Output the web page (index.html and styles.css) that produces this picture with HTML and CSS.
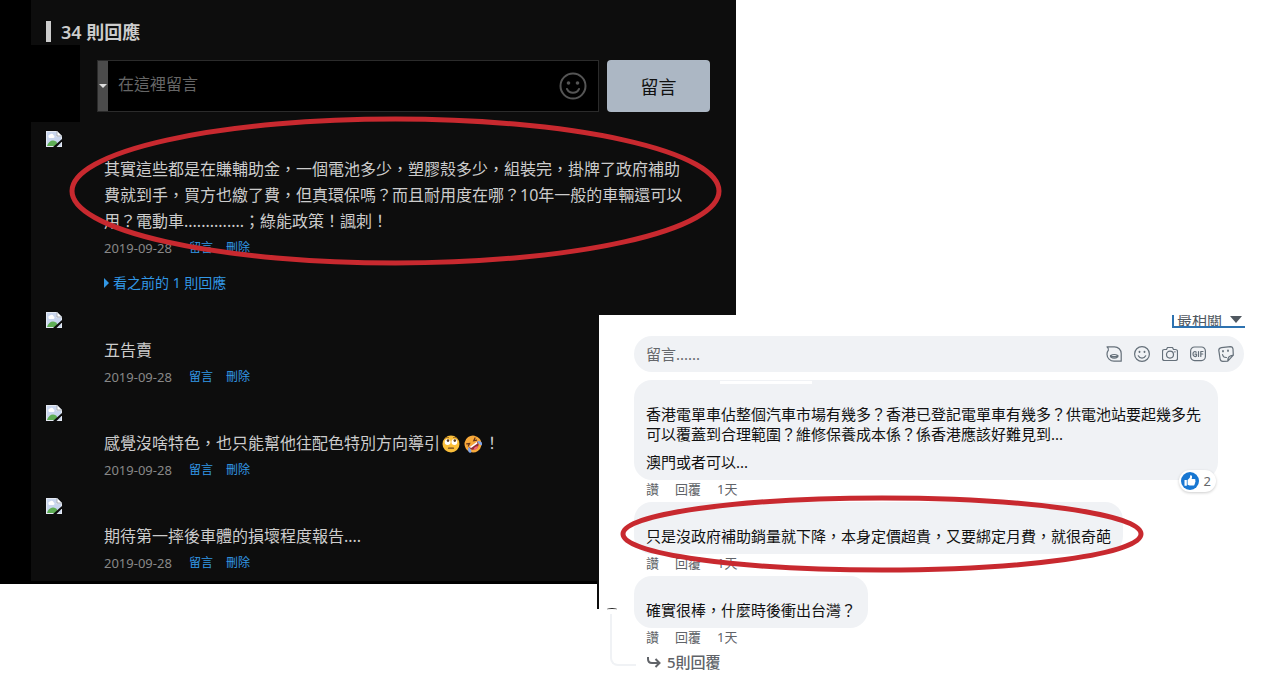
FILE: index.html
```html
<!DOCTYPE html>
<html lang="zh-Hant">
<head>
<meta charset="utf-8">
<meta name="viewport" content="width=device-width, initial-scale=1">
<title>34 則回應</title>
<link rel="stylesheet" href="styles.css">
</head>
<body>
<svg class="defs" aria-hidden="true">
  <symbol id="broken" viewBox="0 0 16 16">
    <path d="M0 0h11l5 5v11H0z" fill="#e4e9f2"/>
    <path d="M1 1h9.500v5H15v9H1z" fill="#c9d6ee"/>
    <path d="M2.500 6a1.800 1.800 0 0 1 1.500-2.500 2 2 0 0 1 3.500.8A1.400 1.400 0 0 1 7.500 7H3z" fill="#fff"/>
    <path d="M1 15c1-3.500 3.500-5.500 6-5.500 2 0 3.500 1 4 2V15z" fill="#5fae56"/>
    <path d="M11 0v5h5z" fill="#fff" stroke="#8c939c" stroke-width=".7"/>
    <path d="M16 8v2.500L10.500 16H7z" fill="#0d0d0d"/>
  </symbol>
</svg>
<main class="collage">
  <section class="forum">
    <h1 class="forum-title">34 則回應</h1>
    <form class="composer">
      <div class="composer-avatar"></div>
      <div class="composer-box">
        <button class="identity" type="button" aria-label="選擇身分"><svg width="8" height="4" viewBox="0 0 8 4" aria-hidden="true"><path d="M0 0h8L4 4z" fill="#ddd"/></svg></button>
        <input class="composer-input" type="text" aria-label="在這裡留言" placeholder="在這裡留言">
        <button class="smile" type="button" aria-label="表情符號"><svg width="28" height="28" viewBox="0 0 28 28" fill="none" stroke="#555" stroke-width="2" aria-hidden="true"><circle cx="14" cy="14" r="12.500"/><path d="M8 17c2.500 5 9.500 5 12 0" stroke-linecap="round"/><circle cx="9.500" cy="11" r="1.800" fill="#555" stroke="none"/><circle cx="18.500" cy="11" r="1.800" fill="#555" stroke="none"/></svg></button>
      </div>
      <button class="submit" type="button">留言</button>
    </form>
    <ul class="posts">
      <li class="post">
        <svg class="broken" role="img" aria-label="頭像"><use href="#broken"/></svg>
        <div class="post-body">
          <p class="post-text">其實這些都是在賺輔助金，一個電池多少，塑膠殼多少，組裝完，掛牌了政府補助<br>費就到手，買方也繳了費，但真環保嗎？而且耐用度在哪？10年一般的車輛還可以<br>用？電動車..............；綠能政策！諷刺！</p>
          <div class="post-meta"><time>2019-09-28</time><a href="#">留言</a><a href="#">刪除</a></div>
          <a class="earlier" href="#"><svg width="5" height="10" viewBox="0 0 5 10" aria-hidden="true"><path d="M0 0l5 5-5 5z" fill="#3298e6"/></svg>看之前的 1 則回應</a>
        </div>
      </li>
      <li class="post">
        <svg class="broken" role="img" aria-label="頭像"><use href="#broken"/></svg>
        <div class="post-body">
          <p class="post-text">五告賣</p>
          <div class="post-meta"><time>2019-09-28</time><a href="#">留言</a><a href="#">刪除</a></div>
        </div>
      </li>
      <li class="post">
        <svg class="broken" role="img" aria-label="頭像"><use href="#broken"/></svg>
        <div class="post-body">
          <p class="post-text">感覺沒啥特色，也只能幫他往配色特別方向導引<svg class="emoji" viewBox="0 0 18 18" role="img" aria-label="翻白眼"><circle cx="9" cy="9" r="8.500" fill="#fbbf3a"/><circle cx="5.600" cy="7" r="2.900" fill="#fff"/><circle cx="12.400" cy="7" r="2.900" fill="#fff"/><circle cx="6" cy="5.600" r="1.300" fill="#5c3b1e"/><circle cx="12.800" cy="5.600" r="1.300" fill="#5c3b1e"/><path d="M3 3.200q2-1.500 4-.6M11 2.600q2-.9 4 .6" fill="none" stroke="#8a5a1c" stroke-width=".8"/><path d="M6.500 13.200h5" stroke="#6b421c" stroke-width="1.200" stroke-linecap="round"/></svg><svg class="emoji" viewBox="0 0 18 18" role="img" aria-label="笑到打滾"><g transform="rotate(-35 9 9)"><circle cx="9" cy="9" r="8.500" fill="#f8a93a"/><path d="M3.500 5l3 1.700-3 1.500M14.500 5l-3 1.700 3 1.500" fill="none" stroke="#65351c" stroke-width="1.200"/><path d="M3.800 9.500h10.400c0 7-10.400 7-10.400 0z" fill="#922d35"/><path d="M4.500 9.500h9l-.6 1.700H5.100z" fill="#fff"/><path d="M6 14q3-2.500 6 0-3 2-6 0z" fill="#f0617a"/><path d="M3.700 9C1 10.500.3 13 1.500 14.500S5 13.500 3.700 9zM14.300 9c2.700 1.500 3.400 4 2.200 5.500S13 13.500 14.300 9z" fill="#7fa3e8"/></g></svg>！</p>
          <div class="post-meta"><time>2019-09-28</time><a href="#">留言</a><a href="#">刪除</a></div>
        </div>
      </li>
      <li class="post">
        <svg class="broken" role="img" aria-label="頭像"><use href="#broken"/></svg>
        <div class="post-body">
          <p class="post-text">期待第一摔後車體的損壞程度報告....</p>
          <div class="post-meta"><time>2019-09-28</time><a href="#">留言</a><a href="#">刪除</a></div>
        </div>
      </li>
    </ul>
    <svg class="ring ring-forum" viewBox="0 0 650 150" preserveAspectRatio="none" aria-hidden="true"><ellipse cx="325" cy="75" rx="323" ry="72"/></svg>
  </section>

  <section class="social">
    <div class="sort-row"><button class="sort" type="button">最相關<svg width="12" height="7" viewBox="0 0 12 7" aria-hidden="true"><path d="M0 0h12L6 7z" fill="#505860"/></svg></button></div>
    <form class="reply-box">
      <input class="reply-input" type="text" aria-label="留言" placeholder="留言......">
      <button class="tool" type="button" aria-label="虛擬替身"><svg viewBox="0 0 16 16"><path d="M1 .8h7.500a6.700 6.700 0 0 1 6.700 6.700v7.700H8A7 7 0 0 1 1 8.200Q1 6 2.400 4.200 3 2.700 1 .8z"/><path d="M4.500 9.500q3.700-2 7.400 0v1.200q-3.700 3-7.400 0zM4.500 9.700q3.700 2 7.400 0"/></svg></button>
      <button class="tool" type="button" aria-label="表情符號"><svg viewBox="0 0 16 16"><circle cx="8" cy="8" r="7.400"/><path d="M4.300 9.800c1.500 3 5.900 3 7.400 0"/><path class="dot" d="M5.500 5.600v.4M10.500 5.600v.4"/></svg></button>
      <button class="tool" type="button" aria-label="相機"><svg viewBox="0 0 16 16"><path d="M2.500 3.500h2l1-2h5l1 2h2q2 0 2 2v7q0 2-2 2h-11q-2 0-2-2v-7q0-2 2-2z"/><circle cx="8" cy="8.600" r="3.500"/><path d="M12.700 5.800h.4"/></svg></button>
      <button class="tool" type="button" aria-label="GIF"><svg viewBox="0 0 16 16"><rect x=".6" y="1" width="14.800" height="13.600" rx="4"/><path d="M6.300 6.200C5 5 3 5.700 3 8s2.200 3.200 3.500 2V8.200H5M8.500 5.500v5M10.800 10.500v-5H13M10.800 8h2"/></svg></button>
      <button class="tool" type="button" aria-label="貼圖"><svg viewBox="0 0 16 16"><path d="M3.400 1.600l9-1q2.300 0 2.600 2.400l.3 6.200-5.500 5.900-5 .2q-2.300 0-2.700-2.500L.8 4.300q0-2.300 2.600-2.700zM9.800 15.100q-.4-5.300 5.500-5.900M4.500 8.500q.6 3.200 4 3"/><path class="dot" d="M5 5v.4M10 4.500v.4"/></svg></button>
    </form>

    <article class="comment">
      <div class="bubble bubble-wide">
        <p>香港電單車佔整個汽車市場有幾多？香港已登記電單車有幾多？供電池站要起幾多先可以覆蓋到合理範圍？維修保養成本係？係香港應該好難見到...</p>
        <p>澳門或者可以...</p>
        <span class="name-mask"></span>
        <span class="likes"><svg width="18" height="18" viewBox="0 0 18 18" role="img" aria-label="讚"><circle cx="9" cy="9" r="9" fill="#1877d2"/><path d="M3.500 8h2.300v5.800H3.500zM6.600 8l2.200-2.300.5-2.400c1.800-.3 2.300 1.200 1.300 3.700h2.800c1 0 1.400 1 .8 1.700.5.500.4 1.300-.1 1.700.2.600 0 1.200-.5 1.500.1 1-.5 1.600-1.500 1.600H8.600l-2-.7z" fill="#fff"/></svg>2</span>
      </div>
      <div class="actions"><a href="#">讚</a><a href="#">回覆</a><time>1天</time></div>
    </article>
    <article class="comment">
      <div class="bubble"><p>只是沒政府補助銷量就下降，本身定價超貴，又要綁定月費，就很奇葩</p></div>
      <div class="actions"><a href="#">讚</a><a href="#">回覆</a><time>1天</time></div>
    </article>
    <article class="comment threaded">
      <div class="bubble"><p>確實很棒，什麼時後衝出台灣？</p></div>
      <div class="actions"><a href="#">讚</a><a href="#">回覆</a><time>1天</time></div>
      <a class="replies" href="#"><svg width="14" height="12" viewBox="0 0 14 12" fill="none" stroke="#606368" stroke-width="2" aria-hidden="true"><path d="M1 1v2q0 4 4 4h7M8.500 3l4 4-4 4"/></svg>5則回覆</a>
    </article>
    <svg class="ring ring-social" viewBox="0 0 522 78" preserveAspectRatio="none" aria-hidden="true"><ellipse cx="261" cy="39" rx="259" ry="36"/></svg>
  </section>
</main>
</body>
</html>
```

FILE: styles.css
```css
* { box-sizing: border-box; }

body {
  margin: 0;
  background: #fff;
  font-family: "Noto Sans", "Noto Sans CJK TC", sans-serif;
}

p, h1, ul { margin: 0; padding: 0; }
ul { list-style: none; }
a { text-decoration: none; }

button, input {
  margin: 0;
  padding: 0;
  border: 0;
  background: none;
  font-family: inherit;
}

button { cursor: pointer; }
.defs { position: absolute; width: 0; height: 0; }

/* Two overlapping panels share the middle column */
.collage {
  display: grid;
  grid-template-columns: 599fr 137fr 540fr;
  align-items: start;
  min-height: 100vh;
}

.forum {
  position: relative;
  grid-column: 1 / 3;
  grid-row: 1;
  min-width: 0;
  border-left: 31px solid #000;
  border-bottom: 3px solid #000;
  background: #0d0d0d;
  color: #ccc;
}

.forum-title {
  display: flex;
  align-items: center;
  gap: 10px;
  height: 45px;
  padding: 18px 0 0 15px;
  font-size: 18px;
  font-weight: 600;
  line-height: 24px;
}

.forum-title::before {
  content: "";
  width: 5px;
  height: 21px;
  background: #ccc;
}

.composer {
  display: flex;
  align-items: flex-start;
  padding-right: 26px;
}

.composer-avatar {
  width: 49px;
  height: 77px;
  margin-right: 17px;
  background: #000;
}

.composer-box {
  display: flex;
  flex: 1;
  min-width: 0;
  height: 52px;
  margin: 15px 8px 0 0;
  border: 1px solid #2b2b2b;
  background: #000;
}

.identity {
  display: grid;
  place-items: center;
  width: 10px;
  background: #4b4b4b;
}

.composer-input {
  flex: 1;
  min-width: 0;
  padding-left: 10px;
  padding-bottom: 4px;
  color: #ccc;
  font-size: 16px;
}

.composer-input::placeholder { color: #666; opacity: 1; }

.smile {
  display: grid;
  place-items: center;
  width: 50px;
}

.submit {
  width: 103px;
  height: 52px;
  margin-top: 15px;
  border-radius: 4px;
  background: #acb7c4;
  color: #111;
  font-size: 18px;
}

.posts {
  display: grid;
  gap: 19px;
  padding: 9px 20px 9px 15px;
}

.broken { display: block; width: 16px; height: 16px; }
.post-body { padding: 9px 0 0 58px; }

.post-text {
  font-size: 16px;
  line-height: 26px;
}

.emoji {
  width: 18px;
  height: 18px;
  margin: 0 2px;
  vertical-align: -4px;
}

.post-meta {
  display: flex;
  align-items: center;
  gap: 13px;
  height: 18px;
  margin-top: 5px;
  color: #888;
  font-size: 13px;
  line-height: 18px;
}

.post-meta time { margin-right: 4px; }
.post-meta a, .earlier { color: #3298e6; }
.post-meta a { font-size: 12px; }

.earlier {
  display: flex;
  align-items: center;
  gap: 4px;
  margin: 16px 0 20px;
  font-size: 14px;
  line-height: 19px;
}

.post:first-child { margin-bottom: -19px; }

.social {
  position: relative;
  grid-column: 2 / 4;
  grid-row: 1;
  min-width: 0;
  margin-top: 315px;
  padding: 0 32px 0 35px;
  background: #fff;
  color: #111;
}

.social::before {
  content: "";
  position: absolute;
  left: -2px;
  top: 0;
  width: 2px;
  height: 294px;
  background: #0d0d0d;
}

.sort-row {
  display: flex;
  justify-content: flex-end;
  height: 21px;
}

.sort {
  display: flex;
  align-items: center;
  gap: 8px;
  height: 13px;
  margin-right: -1px;
  padding: 0 3px 2px 3px;
  overflow: hidden;
  border-left: 2px solid #2d72b0;
  border-bottom: 2px solid #2d72b0;
  color: #505860;
  font-size: 15px;
  line-height: 10px;
}

.reply-box {
  display: flex;
  align-items: center;
  gap: 12px;
  height: 36px;
  margin-bottom: 8px;
  padding: 0 10px 0 12px;
  border-radius: 18px;
  background: #f0f2f5;
}

.reply-input {
  flex: 1;
  min-width: 0;
  color: #111;
  font-size: 15px;
}

.reply-input::placeholder { color: #65676b; opacity: 1; }

.tool, .tool svg { display: block; width: 16px; height: 16px; }

.tool svg {
  fill: none;
  stroke: #65707a;
  stroke-width: 1.2;
  stroke-linecap: round;
  stroke-linejoin: round;
}

.tool .dot { stroke-width: 1.8; }

.bubble {
  position: relative;
  width: fit-content;
  padding: 24px 12px 8px;
  border-radius: 18px;
  background: #f0f2f5;
  font-size: 15px;
  line-height: 20px;
}

.bubble-wide { margin-right: 26px; }
.bubble p + p { margin-top: 8px; }

.name-mask {
  position: absolute;
  left: 86px;
  top: 1px;
  width: 92px;
  height: 3px;
  background: #fff;
}

.likes {
  position: absolute;
  right: 2px;
  bottom: -12px;
  display: flex;
  align-items: center;
  gap: 5px;
  height: 22px;
  padding: 0 5px 0 2px;
  border-radius: 11px;
  background: #fff;
  box-shadow: 0 1px 3px rgba(0, 0, 0, .2);
  color: #65676b;
  font-size: 13px;
}

.actions {
  display: flex;
  gap: 16px;
  height: 22px;
  padding-left: 12px;
  font-size: 13px;
  line-height: 18px;
}

.actions, .actions a, .replies { color: #606368; }

.threaded { position: relative; }

.threaded::before {
  content: "";
  position: absolute;
  left: -24px;
  top: 38px;
  width: 24px;
  height: 50px;
  border-left: 2px solid #f0f2f5;
  border-bottom: 2px solid #f0f2f5;
  border-radius: 0 0 0 8px;
}

.threaded::after {
  content: "";
  position: absolute;
  left: -27px;
  top: 32px;
  width: 10px;
  height: 2px;
  border-top: 1px solid #222;
  border-radius: 50%;
}

.replies {
  display: flex;
  align-items: center;
  gap: 6px;
  padding: 2px 0 0 13px;
  font-size: 15px;
  font-weight: 500;
  line-height: 20px;
}

/* Hand-drawn highlights over the comments */
.ring {
  position: absolute;
  overflow: visible;
  pointer-events: none;
  fill: none;
  stroke: #c8292f;
  stroke-width: 5px;
}

.ring-forum { left: 39px; top: 116px; width: calc(100% - 54px); height: 150px; }
.ring-social { left: 22px; top: 180px; width: calc(100% - 155px); height: 78px; }
```
